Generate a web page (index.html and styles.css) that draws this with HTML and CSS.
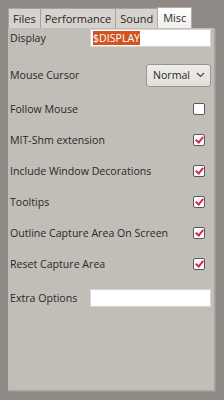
FILE: index.html
```html
<!DOCTYPE html>
<html>
<head>
    <meta charset="utf-8">
    <title>Misc</title>
    <link rel="stylesheet" href="styles.css">
</head>
<body>
    <div class="tabs">
        <div class="tab">Files</div>
        <div class="tab">Performance</div>
        <div class="tab">Sound</div>
        <div class="tab active">Misc</div>
    </div>

    <div class="panel">
        <div class="row first">
            <span class="label">Display</span>
            <div class="entry"><span class="selected">$DISPLAY</span></div>
        </div>

        <div class="row combo-row">
            <span class="label">Mouse Cursor</span>
            <div class="combo">Normal
                <svg width="9" height="6" viewBox="0 0 9 6"><path d="M1 1 L4.5 4.5 L8 1" fill="none" stroke="#444" stroke-width="1.2"/></svg>
            </div>
        </div>

        <div class="row check-row">
            <span class="label">Follow Mouse</span>
            <span class="check"></span>
        </div>
        <div class="row check-row">
            <span class="label">MIT-Shm extension</span>
            <span class="check on"></span>
        </div>
        <div class="row check-row">
            <span class="label">Include Window Decorations</span>
            <span class="check on"></span>
        </div>
        <div class="row check-row">
            <span class="label">Tooltips</span>
            <span class="check on"></span>
        </div>
        <div class="row check-row">
            <span class="label">Outline Capture Area On Screen</span>
            <span class="check on"></span>
        </div>
        <div class="row check-row">
            <span class="label">Reset Capture Area</span>
            <span class="check on"></span>
        </div>

        <div class="row extra">
            <span class="label">Extra Options</span>
            <div class="entry"></div>
        </div>
    </div>
</body>
</html>
```

FILE: styles.css
```css
body {
    margin: 0;
    background: #8f8a85;
    font-family: "Open Sans", "DejaVu Sans", sans-serif;
    font-size: 11px;
    color: #2b2828;
    width: 224px;
    height: 400px;
    overflow: hidden;
}
.tabs {
    display: flex;
    align-items: flex-end;
    padding: 7px 0 0 8px;
    height: 21px;
}
.tab {
    height: 19px;
    line-height: 19px;
    padding: 0 4px;
    background: #d6d2cd;
    border: 1px solid #a7a29c;
    border-bottom: none;
    font-size: 11px;
    color: #2a2525;
}
.tab + .tab {
    margin-left: -1px;
}
.tab.active {
    height: 20px;
    background: linear-gradient(#ffffff, #efeeec);
    border-color: #b3aea8;
    padding: 0 5px;
}
.panel {
    margin: 0 9px 0 8px;
    height: 363px;
    background: #c2bdb7;
    border-right: 1px solid #a9a49e;
    border-bottom: 1px solid #a9a49e;
    box-shadow: 1px 1px 0 #9e9994;
    padding: 0 3px 0 2px;
    box-sizing: border-box;
}
.row {
    display: flex;
    align-items: center;
    justify-content: space-between;
}
.label {
    font-size: 10.6px;
    white-space: nowrap;
}
.first {
    height: 20px;
}
.entry {
    width: 121px;
    height: 18px;
    background: #fff;
    border: 1px solid #d8d4cf;
    display: flex;
    align-items: center;
    padding-left: 2px;
    box-sizing: border-box;
}
.selected {
    background: #d0541f;
    color: #fff;
    font-size: 10.6px;
    line-height: 14px;
}
.combo-row {
    height: 24px;
    margin-top: 15px;
}
.combo {
    width: 65px;
    height: 23px;
    box-sizing: border-box;
    border: 1px solid #9a958f;
    border-radius: 3px;
    background: linear-gradient(#efedeb, #e2dfdb);
    display: flex;
    align-items: center;
    justify-content: space-between;
    padding: 0 5px 0 6px;
    font-size: 10.6px;
}
.check-row {
    height: 31px;
}
.combo-row + .check-row {
    margin-top: 6px;
}
.check {
    width: 10px;
    height: 10px;
    border: 1px solid #5a5755;
    border-radius: 2px;
    background: #fff;
    margin-right: 6px;
    position: relative;
}
.check.on::after {
    content: "";
    position: absolute;
    left: 3px;
    top: 0px;
    width: 3px;
    height: 6px;
    border-right: 2px solid #e0224f;
    border-bottom: 2px solid #e0224f;
    transform: rotate(40deg);
}
.extra {
    height: 20px;
    margin-top: 9px;
}
```
